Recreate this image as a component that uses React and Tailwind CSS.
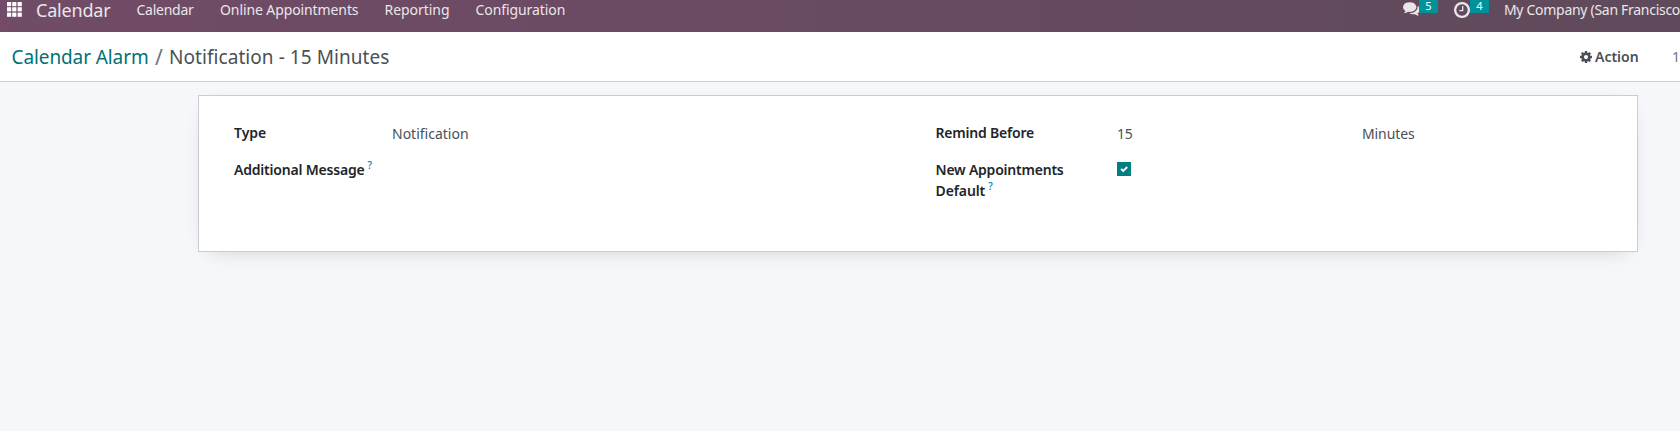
import React from 'react';

const icons = {
  comments:
    'M1408 768q0 139-94 257t-256.5 186.5-353.5 68.5q-86 0-176-16-124 88-278 128-36 9-86 16h-3q-11 0-20.5-8t-11.5-21q-1-3-1-6.5t.5-6.5 2-6l2.5-5 3.5-5.5 4-5 4.5-5 4-4.5q5-6 23-25t26-29.5 22.5-29 25-38.5 20.5-44q-124-72-195-177t-71-224q0-139 94-257t256.5-186.5 353.5-68.5 353.5 68.5 256.5 186.5 94 257zm384 256q0 120-71 224.5t-195 176.5q10 24 20.5 44t25 38.5 22.5 29 26 29.5 23 25q1 1 4 4.5t4.5 5 4 5 3.5 5.5l2.5 5 2 6 .5 6.5-1 6.5q-3 14-13 22t-22 7q-50-7-86-16-154-40-278-128-90 16-176 16-271 0-472-132 58 4 88 4 161 0 309-45t264-129q125-92 192-212t67-254q0-77-23-152 129 71 204 178t75 230z',
  clock:
    'M1024 544v448q0 14-9 23t-23 9h-320q-14 0-23-9t-9-23v-64q0-14 9-23t23-9h224v-352q0-14 9-23t23-9h64q14 0 23 9t9 23zm416 352q0-148-73-273t-198-198-273-73-273 73-198 198-73 273 73 273 198 198 273 73 273-73 198-198 73-273zm224 0q0 209-103 385.5t-279.5 279.5-385.5 103-385.5-103-279.5-279.5-103-385.5 103-385.5 279.5-279.5 385.5-103 385.5 103 279.5 279.5 103 385.5z',
  cog:
    'M1152 896q0-106-75-181t-181-75-181 75-75 181 75 181 181 75 181-75 75-181zm512-109v222q0 12-8 23t-20 13l-185 28q-19 54-39 91 35 50 107 138 10 12 10 25t-9 23q-27 37-99 108t-94 71q-12 0-26-9l-138-108q-44 23-91 38-16 136-29 186-7 28-36 28h-222q-14 0-24.5-8.5t-11.5-21.5l-28-184q-49-16-90-37l-141 107q-10 9-25 9-14 0-25-11-126-114-165-168-7-10-7-23 0-12 8-23 15-21 51-66.5t54-70.5q-27-50-41-99l-183-27q-13-2-21-12.5t-8-23.5v-222q0-12 8-23t19-13l186-28q14-46 39-92-40-57-107-138-10-12-10-24 0-10 9-23 26-36 98.5-107.5t94.5-71.5q13 0 26 10l138 107q44-23 91-38 16-136 29-186 7-28 36-28h222q14 0 24.5 8.5t11.5 21.5l28 184q49 16 90 37l142-107q9-9 24-9 13 0 25 10 129 119 165 170 7 8 7 22 0 12-8 23-15 21-51 66.5t-54 70.5q26 50 41 98l183 28q13 2 21 12.5t8 23.5z',
};

function Icon({ name, viewBox = '128 128 1536 1536', className }) {
  return (
    <svg viewBox={viewBox} fill="currentColor" className={className} aria-hidden="true">
      <path d={icons[name]} />
    </svg>
  );
}

function AppsIcon() {
  return (
    <svg viewBox="0 0 15 15" fill="currentColor" className="h-[15px] w-[15px] shrink-0" aria-hidden="true">
      {[0, 5.2, 10.6].map((y) =>
        [0, 5.2, 10.6].map((x) => <rect key={`${x}-${y}`} x={x} y={y} width="4.2" height="4.2" />)
      )}
    </svg>
  );
}

function Badge({ children }) {
  return (
    <span className="absolute -top-0.5 left-4 flex h-[13px] w-[19px] justify-center bg-[#00929a] text-[11px] leading-[11px] text-white">
      {children}
    </span>
  );
}

function Help() {
  return <sup className="relative -top-1.5 ml-[3px] align-baseline text-[10px] leading-none font-medium tracking-normal text-[#0180a5]">?</sup>;
}

function Label({ children, className = '' }) {
  return <div className={`font-semibold text-[#212529] ${className}`}>{children}</div>;
}

function Navbar() {
  return (
    <header className="flex h-8 items-start bg-linear-to-r from-[#714b67] to-[#5f4a5b] pl-[7px] whitespace-nowrap text-[#ebe6ea]">
      <div className="pt-0.5 text-white">
        <AppsIcon />
      </div>
      <div className="ml-3.5 w-[100.5px] text-[18px] leading-[21px] tracking-[-0.2px]">Calendar</div>
      <nav className="-mt-px flex">
        <a className="w-[83.5px] tracking-[-0.25px]">Calendar</a>
        <a className="w-[164.5px] tracking-[-0.1px]">Online Appointments</a>
        <a className="w-[91px] tracking-[-0.05px]">Reporting</a>
        <a className="tracking-[-0.08px]">Configuration</a>
      </nav>
      <div className="ml-auto flex w-[277px] shrink-0 items-start">
        <div className="relative mt-0.5 w-[51px]">
          <Icon name="comments" viewBox="0 256 1792 1536" className="h-[15px] w-[17px]" />
          <Badge>5</Badge>
        </div>
        <div className="relative mt-0.5 w-[50px]">
          <Icon name="clock" className="h-4 w-4" />
          <Badge>4</Badge>
        </div>
        <div className="-mt-px tracking-[-0.29px]">My Company (San Francisco</div>
      </div>
    </header>
  );
}

function ControlPanel() {
  return (
    <div className="flex h-[50px] items-start border-b border-[#c9ccd2] bg-white pl-[11.5px] whitespace-nowrap">
      <div className="mt-[11px] flex text-[19px] leading-[28px] text-[#495057]">
        <a className="w-[143.5px] tracking-[-0.1px] text-[#017078]">Calendar Alarm</a>
        <span className="w-3.5 text-[21px] text-[#6c757d]">/</span>
        <span className="tracking-[0.06px]">Notification - 15 Minutes</span>
      </div>
      <div className="mt-[14px] ml-auto flex w-[100px] shrink-0 font-medium text-[#495057]">
        <Icon name="cog" className="mt-[5px] mr-[3px] h-3 w-3" />
        <span className="w-[77px] font-semibold">Action</span>
        <span className="font-normal text-[#6c757d]">1</span>
      </div>
    </div>
  );
}

export default function App() {
  return (
    <div className="flex h-[431px] w-[1680px] flex-col overflow-hidden bg-[#f6f7fb] font-['Noto_Sans',sans-serif] text-[14px] leading-[21px]">
      <Navbar />
      <ControlPanel />
      <main className="pt-[13px] pl-[198px]">
        <section className="flex h-[157px] w-[1440px] border border-[#c9ccd2] bg-white pt-[26px] pl-[35px] text-[#495057] shadow-[0_5px_20px_-15px_rgba(0,0,0,0.3),0_8px_24px_-6px_rgba(0,0,0,0.05)]">
          <div className="grid w-[701.5px] grid-cols-[158px_1fr] content-start gap-y-[15px]">
            <Label>Type</Label>
            <div className="pt-px">Notification</div>
            <Label className="whitespace-nowrap tracking-[-0.2px]">
              Additional Message
              <Help />
            </Label>
          </div>
          <div className="grid grid-cols-[181.5px_245px_1fr] content-start gap-y-[15px]">
            <Label className="tracking-[-0.2px]">Remind Before</Label>
            <div className="pt-px tracking-[-0.2px]">15</div>
            <div className="pt-px tracking-[-0.1px]">Minutes</div>
            <Label>
              <div className="tracking-[-0.22px]">New Appointments</div>
              <div className="tracking-[-0.1px]">
                Default
                <Help />
              </div>
            </Label>
            <div className="pt-[3px]">
              <div className="flex h-3.5 w-3.5 items-center justify-center bg-[#017e84] text-white">
                <svg viewBox="0 0 14 14" className="h-3.5 w-3.5" fill="none" stroke="currentColor" strokeWidth="1.8" aria-hidden="true">
                  <path d="M4 6.9 6.2 9 10.2 5" />
                </svg>
              </div>
            </div>
          </div>
        </section>
      </main>
    </div>
  );
}
